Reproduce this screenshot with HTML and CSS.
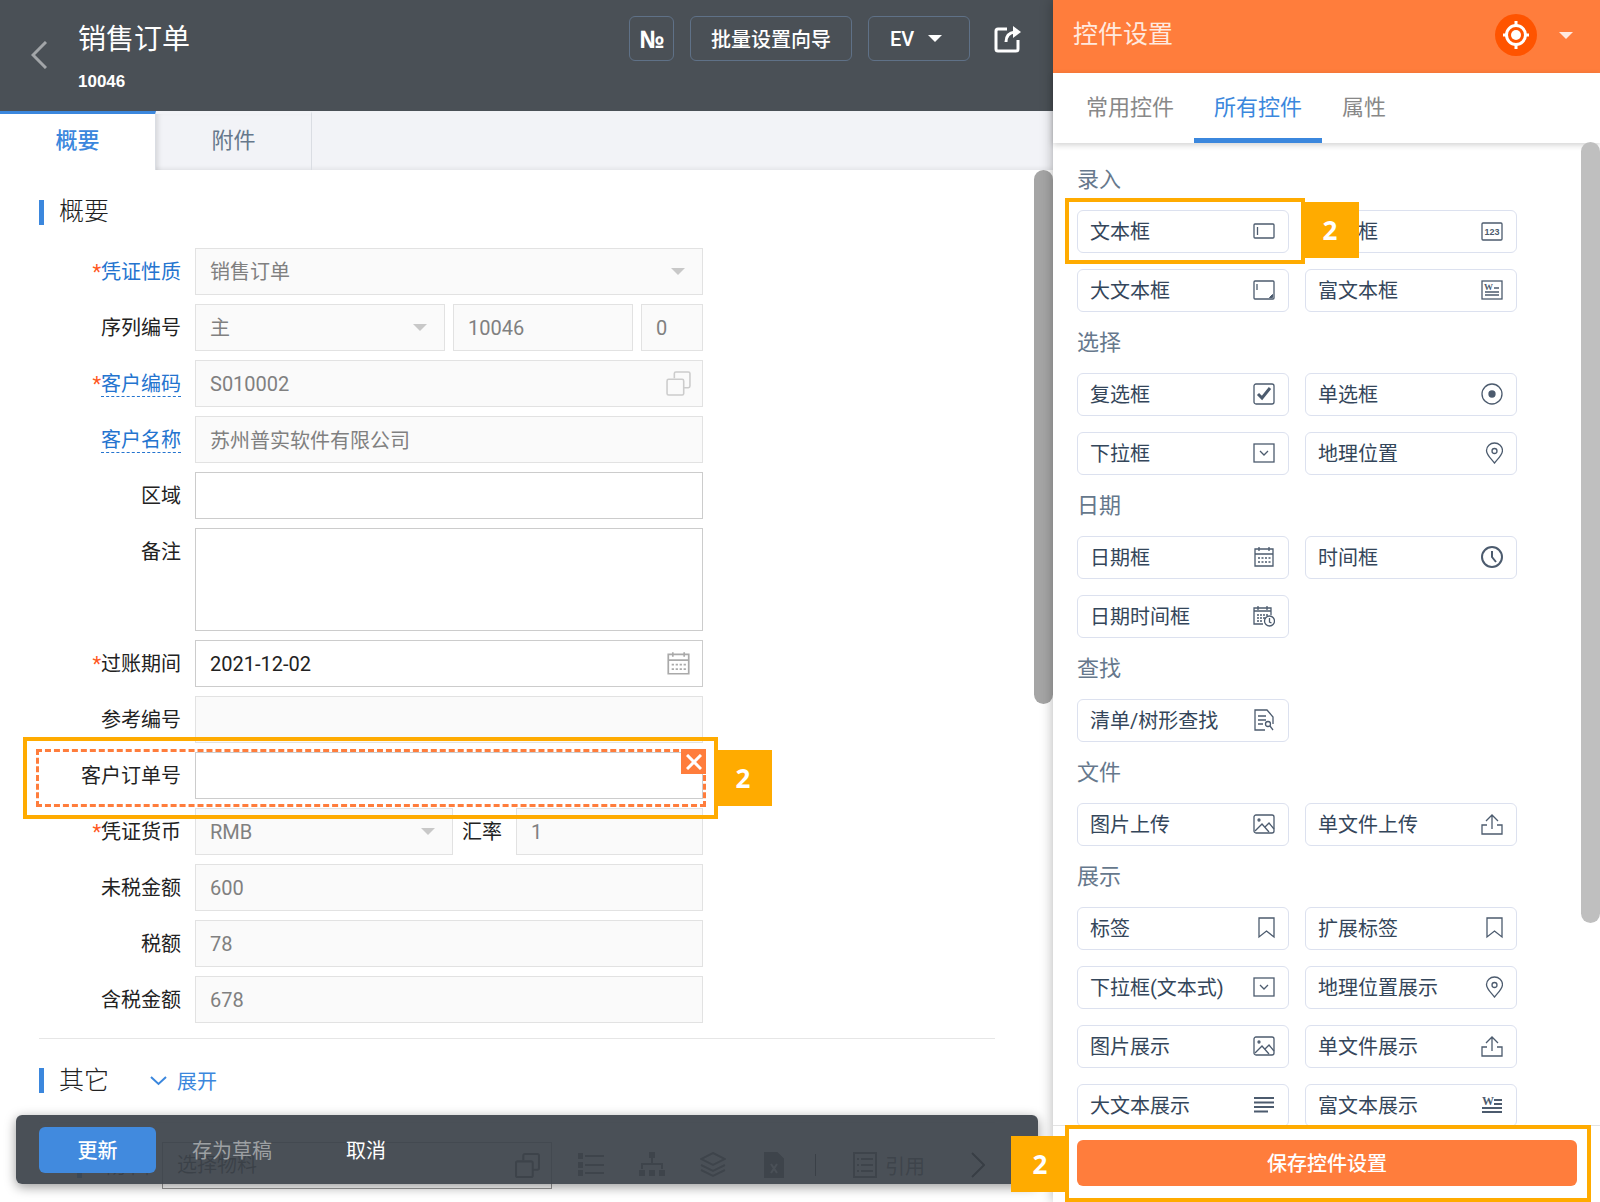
FILE: index.html
```html
<!DOCTYPE html>
<html lang="zh-CN">
<head>
    <meta charset="UTF-8">
    <meta name="viewport" content="width=device-width, initial-scale=1.0">
    <title>销售订单 - 控件设置</title>
    <link rel="stylesheet" href="styles.css">
</head>
<body>
    <!-- Shared icons -->
    <svg class="sprite" aria-hidden="true">
        <symbol id="i-copy" viewBox="0 0 24 24"><path d="M8 7V2.5A1.5 1.5 0 0 1 9.500 1H21.500A1.500 1.500 0 0 1 23 2.500V14.500A1.500 1.500 0 0 1 21.500 16H17"/><rect x="1" y="8" width="16" height="15" rx="1.500"/></symbol>
        <symbol id="i-text" viewBox="0 0 22 22"><rect x="1" y="4" width="20" height="14" rx="1"/><path d="M4.500 7v8"/></symbol>
        <symbol id="i-number" viewBox="0 0 22 22"><rect x="1" y="3" width="20" height="17" rx="1"/><text x="11" y="15" text-anchor="middle" class="icon-text">123</text></symbol>
        <symbol id="i-area" viewBox="0 0 22 22"><rect x="1" y="2" width="20" height="18" rx="1"/><path d="M4 5v6"/><path d="M19.500 15.500v3h-3z" fill="currentColor" stroke-width="1"/></symbol>
        <symbol id="i-rich" viewBox="0 0 22 22"><rect x="1" y="2" width="20" height="18"/><text x="3" y="11" class="icon-serif-small">W</text><path d="M13 9h5M4 13h14M4 16h14"/></symbol>
        <symbol id="i-check" viewBox="0 0 22 22"><rect x="1" y="1" width="20" height="20" rx="2"/><path d="M5 11l4 4 8-10" stroke-width="3"/></symbol>
        <symbol id="i-radio" viewBox="0 0 22 22"><circle cx="11" cy="11" r="10"/><circle cx="11" cy="11" r="3" fill="currentColor"/></symbol>
        <symbol id="i-select" viewBox="0 0 22 22"><rect x="1" y="2" width="20" height="18"/><path d="M7 9l4 4 4-4"/></symbol>
        <symbol id="i-pin" viewBox="0 0 22 22"><path d="M13.500 21C10 16.500 5.500 13 5.500 8.500a8 7.500 0 0 1 16 0C21.500 13 17 16.500 13.500 21z"/><circle cx="13.500" cy="9" r="2.500"/></symbol>
        <symbol id="i-date" viewBox="0 0 22 22"><path d="M2 3h18v17H2zM2 8h18M6 1v4M16 1v4"/><path d="M5 12h13M5 16h13" stroke-dasharray="2 1.500"/></symbol>
        <symbol id="i-clock" viewBox="0 0 22 22"><circle cx="11" cy="11" r="10" stroke-width="2"/><path d="M11 5v6l4 5" stroke-width="2"/></symbol>
        <symbol id="i-datetime" viewBox="0 0 22 22"><path d="M10 19H1V3h17v7M1 6h17M5 1v4M14 1v4"/><path d="M4 10h11M4 13h8M4 16h6" stroke-dasharray="2 1"/><circle cx="16.500" cy="16" r="5"/><path d="M16.500 13v4l2 1"/></symbol>
        <symbol id="i-find" viewBox="0 0 22 22"><path d="M12 21H2V1h12l6 7v7M5 7h8M5 11h8M5 15h5"/><circle cx="15" cy="15" r="2.500"/><path d="M17 17l3 4"/></symbol>
        <symbol id="i-image" viewBox="0 0 22 22"><rect x="1" y="2" width="20" height="18" rx="2"/><circle cx="6" cy="7" r="1"/><path d="M2 18l7-7 7 8M12 14l4-4 5 6"/></symbol>
        <symbol id="i-upload" viewBox="0 0 22 22"><path d="M11 16V3M5 8l6-6 6 6M6 12H1v9h20v-9h-5"/></symbol>
        <symbol id="i-mark" viewBox="0 0 22 22"><path d="M6 1h15v19l-7.500-6L6 20z"/></symbol>
        <symbol id="i-lines" viewBox="0 0 22 22"><path d="M1 4h20M1 8.500h20M1 13h20M1 17.500h14" stroke-width="2"/></symbol>
        <symbol id="i-richview" viewBox="0 0 22 22"><text x="1" y="11" class="icon-serif">W</text><path d="M13 6h8M13 10h8M1 14h20M1 18h20" stroke-width="2"/></symbol>
    </svg>

    <main class="order">
        <header class="order-header">
            <button class="back" aria-label="返回"><svg width="16" height="28" viewBox="0 0 16 28"><path d="M15 1L2 14l13 13"/></svg></button>
            <div class="order-title">
                <h1>销售订单</h1>
                <p>10046</p>
            </div>
            <div class="order-actions">
                <button class="head-btn head-btn-no">№</button>
                <button class="head-btn head-btn-wide">批量设置向导</button>
                <button class="head-btn head-btn-menu">EV <span class="caret"></span></button>
                <button class="share" aria-label="分享"><svg width="28" height="28" viewBox="0 0 28 28"><path d="M13 4H4Q2 4 2 6v18q0 2 2 2h18q2 0 2-2v-9M12 17Q12 8 21 7"/><path d="M19 1l8 6-8 6z" fill="currentColor" stroke="none"/></svg></button>
            </div>
        </header>

        <nav class="order-tabs">
            <a href="#summary" class="active">概要</a>
            <a href="#attachment">附件</a>
        </nav>

        <div class="order-body">
            <section id="summary">
                <h2 class="section-title">概要</h2>
                <form class="fields">
                    <div class="field">
                        <label class="blue" for="nature"><i>*</i>凭证性质</label>
                        <div class="control select"><select id="nature" disabled><option>销售订单</option></select></div>
                    </div>
                    <div class="field">
                        <label for="series">序列编号</label>
                        <div class="series">
                            <div class="control select"><select id="series" disabled><option>主</option></select></div>
                            <input aria-label="编号" value="10046" disabled>
                            <input aria-label="版本" value="0" disabled>
                        </div>
                    </div>
                    <div class="field">
                        <label class="blue" for="custCode"><i>*</i><u>客户编码</u></label>
                        <div class="control"><input id="custCode" value="S010002" disabled><svg class="field-icon light"><use href="#i-copy"/></svg></div>
                    </div>
                    <div class="field">
                        <label class="blue" for="custName"><u>客户名称</u></label>
                        <input id="custName" value="苏州普实软件有限公司" disabled>
                    </div>
                    <div class="field">
                        <label for="area">区域</label>
                        <input id="area">
                    </div>
                    <div class="field">
                        <label for="remark">备注</label>
                        <textarea id="remark"></textarea>
                    </div>
                    <div class="field">
                        <label for="postDate"><i>*</i>过账期间</label>
                        <div class="control"><input id="postDate" value="2021-12-02"><svg class="field-icon"><use href="#i-date"/></svg></div>
                    </div>
                    <div class="field">
                        <label for="refNo">参考编号</label>
                        <input id="refNo" disabled>
                    </div>
                    <div class="field selected">
                        <label for="custOrder">客户订单号</label>
                        <input id="custOrder">
                        <button type="button" class="remove" aria-label="删除"><svg width="16" height="16" viewBox="0 0 16 16"><path d="M1 1l14 14M15 1L1 15"/></svg></button>
                        <div class="callout callout-field"><span>2</span></div>
                    </div>
                    <div class="field">
                        <label for="currency"><i>*</i>凭证货币</label>
                        <div class="currency">
                            <div class="control select"><select id="currency" disabled><option>RMB</option></select></div>
                            <label for="rate">汇率</label>
                            <input id="rate" value="1" disabled>
                        </div>
                    </div>
                    <div class="field">
                        <label for="net">未税金额</label>
                        <input id="net" value="600" disabled>
                    </div>
                    <div class="field">
                        <label for="tax">税额</label>
                        <input id="tax" value="78" disabled>
                    </div>
                    <div class="field">
                        <label for="gross">含税金额</label>
                        <input id="gross" value="678" disabled>
                    </div>
                </form>
            </section>

            <section class="other">
                <h2 class="section-title">其它</h2>
                <a href="#other" class="expand"><svg width="17" height="10" viewBox="0 0 17 10"><path d="M1 1l7.500 7L16 1"/></svg>展开</a>
            </section>

            <section class="items">
                <svg class="items-back" viewBox="0 0 10 18"><path d="M9 1L1 9l8 8"/></svg>
                <h2 class="section-title">物料</h2>
                <div class="control items-search"><input aria-label="选择物料" placeholder="选择物料"><svg class="field-icon"><use href="#i-copy"/></svg></div>
                <div class="items-tools">
                    <svg viewBox="0 0 26 26"><path d="M7 4h19M7 13h19M7 21h19" /><path d="M0 2h4v4H0zM0 11h4v4H0zM0 19h4v4H0z" fill="currentColor"/></svg>
                    <svg viewBox="0 0 26 26"><path d="M13 6v6M3 17v-5h20v5"/><path d="M11 1h4v4h-4zM1 19h4v4H1zM11 19h4v4h-4zM21 19h4v4h-4z" fill="currentColor"/></svg>
                    <svg viewBox="0 0 26 26"><path d="M13 1l12 6-12 6L1 7zM1 13l12 6 12-6M1 18l12 6 12-6"/></svg>
                    <svg viewBox="0 0 26 26"><path d="M4 1h12l6 6v18H4z" fill="currentColor"/><path d="M10 12l6 9M16 12l-6 9" class="cut"/></svg>
                </div>
                <div class="items-quote">
                    <svg viewBox="0 0 26 26"><path d="M2 1h22v24H2zM5 7h2M5 13h2M5 19h2M9 7h12M9 13h12M9 19h12"/></svg>
                    <span>引用</span>
                </div>
                <svg class="items-next" viewBox="0 0 14 26"><path d="M1 1l12 12L1 25"/></svg>
            </section>
        </div>

        <div class="scrollbar order-scroll"></div>

        <footer class="action-bar">
            <button class="primary">更新</button>
            <button class="muted">存为草稿</button>
            <button>取消</button>
        </footer>
    </main>

    <aside class="panel">
        <header class="panel-header">
            <h2>控件设置</h2>
            <button class="locate" aria-label="定位"><svg width="28" height="28" viewBox="0 0 28 28"><circle cx="14" cy="14" r="9.500"/><circle cx="14" cy="14" r="5" fill="currentColor" stroke="none"/><path d="M14 0v5M14 23v5M1 14h4M23 14h4"/></svg></button>
            <span class="caret"></span>
        </header>
        <nav class="panel-tabs">
            <a href="#common">常用控件</a>
            <a href="#all" class="active">所有控件</a>
            <a href="#props">属性</a>
        </nav>

        <div class="panel-body">
            <h3>录入</h3>
            <div class="widgets">
                <div class="marked">
                    <button class="widget">文本框<svg><use href="#i-text"/></svg></button>
                    <div class="callout callout-widget"><span>2</span></div>
                </div>
                <button class="widget">数字框<svg><use href="#i-number"/></svg></button>
                <button class="widget">大文本框<svg><use href="#i-area"/></svg></button>
                <button class="widget">富文本框<svg><use href="#i-rich"/></svg></button>
            </div>
            <h3>选择</h3>
            <div class="widgets">
                <button class="widget">复选框<svg><use href="#i-check"/></svg></button>
                <button class="widget">单选框<svg><use href="#i-radio"/></svg></button>
                <button class="widget">下拉框<svg><use href="#i-select"/></svg></button>
                <button class="widget">地理位置<svg><use href="#i-pin"/></svg></button>
            </div>
            <h3>日期</h3>
            <div class="widgets">
                <button class="widget">日期框<svg><use href="#i-date"/></svg></button>
                <button class="widget">时间框<svg><use href="#i-clock"/></svg></button>
                <button class="widget">日期时间框<svg><use href="#i-datetime"/></svg></button>
            </div>
            <h3>查找</h3>
            <div class="widgets">
                <button class="widget">清单/树形查找<svg><use href="#i-find"/></svg></button>
            </div>
            <h3>文件</h3>
            <div class="widgets">
                <button class="widget">图片上传<svg><use href="#i-image"/></svg></button>
                <button class="widget">单文件上传<svg><use href="#i-upload"/></svg></button>
            </div>
            <h3>展示</h3>
            <div class="widgets">
                <button class="widget">标签<svg><use href="#i-mark"/></svg></button>
                <button class="widget">扩展标签<svg><use href="#i-mark"/></svg></button>
                <button class="widget">下拉框(文本式)<svg><use href="#i-select"/></svg></button>
                <button class="widget">地理位置展示<svg><use href="#i-pin"/></svg></button>
                <button class="widget">图片展示<svg><use href="#i-image"/></svg></button>
                <button class="widget">单文件展示<svg><use href="#i-upload"/></svg></button>
                <button class="widget">大文本展示<svg><use href="#i-lines"/></svg></button>
                <button class="widget">富文本展示<svg><use href="#i-richview"/></svg></button>
            </div>
        </div>

        <div class="scrollbar panel-scroll"></div>

        <footer class="panel-footer">
            <button class="save">保存控件设置</button>
            <div class="callout callout-save"><span>2</span></div>
        </footer>
    </aside>
</body>
</html>
```

FILE: styles.css
```css
:root {
    --dark: #4a5056;
    --blue: #3b87dd;
    --orange: #ff7d3c;
    --mark: #ffab00;
    --slate: #66788c;
    --ink: #34465a;
}

* {
    box-sizing: border-box;
}

body {
    display: flex;
    height: 100vh;
    margin: 0;
    overflow: hidden;
    background: #fff;
    font-family: Roboto, 'Noto Sans CJK SC', sans-serif;
    font-size: 20px;
    color: #222;
}

h1, h2, h3, p {
    margin: 0;
    font-weight: 400;
}

a {
    text-decoration: none;
}

button {
    padding: 0;
    border: none;
    background: none;
    color: inherit;
    font: inherit;
    cursor: pointer;
}

svg {
    fill: none;
    stroke: currentColor;
    stroke-width: 1.5;
}

.sprite {
    position: absolute;
    width: 0;
    height: 0;
}

.icon-text,
.icon-serif,
.icon-serif-small {
    fill: currentColor;
    stroke: none;
    font-family: 'Liberation Sans', sans-serif;
    font-size: 9px;
    font-weight: 700;
}

.icon-serif {
    font-family: 'Liberation Serif', serif;
    font-size: 12px;
}

.icon-serif-small {
    font-family: 'Liberation Serif', serif;
}

.caret {
    border: 7px solid transparent;
    border-top-color: currentColor;
    border-bottom: none;
}

/* Order page */
.order {
    position: relative;
    display: flex;
    flex: 1;
    flex-direction: column;
    min-width: 0;
}

.order-header {
    display: flex;
    height: 111px;
    padding: 16px 31px 0 31px;
    background: var(--dark);
    color: #fff;
}

.back {
    align-self: flex-start;
    width: 16px;
    height: 28px;
    margin: 25px 31px 0 0;
    color: #a2a5a8;
}

.back svg {
    display: block;
    stroke-width: 3;
}

.order-title h1 {
    font-size: 28px;
    line-height: 48px;
}

.order-title p {
    font-family: 'Liberation Sans', sans-serif;
    font-size: 17px;
    font-weight: 700;
    line-height: 36px;
}

.order-actions {
    display: flex;
    gap: 16px;
    margin-left: auto;
}

.head-btn {
    display: flex;
    align-items: center;
    justify-content: center;
    height: 45px;
    border: 1px solid #5f7187;
    border-radius: 6px;
    font-weight: 500;
}

.head-btn-no {
    width: 45px;
    font-family: 'Open Sans', sans-serif;
    font-size: 24px;
    font-weight: 700;
}

.head-btn-wide {
    width: 162px;
}

.head-btn-menu {
    gap: 14px;
    width: 102px;
    padding-right: 6px;
}

.share {
    width: 28px;
    height: 45px;
    margin-left: 8px;
}

.share svg {
    display: block;
    stroke-width: 3;
}

.order-tabs {
    display: flex;
    height: 59px;
    background: #f2f3f7;
    box-shadow: inset 0 -2px 4px rgba(0, 0, 0, 0.06);
}

.order-tabs a {
    width: 156px;
    border-top: 3px solid transparent;
    border-right: 1px solid #dadde3;
    color: var(--slate);
    font-size: 22px;
    line-height: 54px;
    text-align: center;
}

.order-tabs .active {
    border-top-color: var(--blue);
    background: #fff;
    color: var(--blue);
    font-weight: 500;
}

.order-tabs .active + a {
    box-shadow: inset 5px 0 5px -3px rgba(0, 0, 0, 0.12);
}

.order-body {
    flex: 1;
    min-height: 0;
    overflow: hidden;
    padding: 24px 58px 0 39px;
}

.section-title {
    display: flex;
    align-items: center;
    gap: 15px;
    height: 36px;
    font-size: 25px;
    font-weight: 300;
    line-height: 34px;
    color: #222;
}

.section-title::before {
    content: "";
    width: 5px;
    height: 25px;
    background: var(--blue);
}

.fields {
    display: flex;
    flex-direction: column;
    gap: 9px;
    max-width: 664px;
    padding: 18px 0 15px;
}

.field {
    position: relative;
    display: grid;
    grid-template-columns: 142px 1fr;
    column-gap: 14px;
}

label {
    height: 47px;
    line-height: 49px;
    text-align: right;
    white-space: nowrap;
}

label i {
    color: #ff5722;
    font-style: normal;
}

label.blue {
    color: #2474cf;
}

label u {
    border-bottom: 1px dashed #2474cf;
    text-decoration: none;
}

input, select, textarea {
    display: block;
    width: 100%;
    min-width: 0;
    height: 47px;
    margin: 0;
    padding: 0 14px;
    border: 1px solid #ccc;
    border-radius: 0;
    outline: none;
    background: #fff;
    color: #222;
    font: inherit;
    appearance: none;
    resize: none;
}

input:disabled, select:disabled {
    border-color: #e2e2e2;
    background: #fafafa;
    color: #808080;
    opacity: 1;
}

textarea {
    height: 103px;
}

.control {
    position: relative;
}

.select::after {
    content: "";
    position: absolute;
    top: 20px;
    right: 18px;
    border: 7px solid transparent;
    border-top-color: #c8c8c8;
    border-bottom: none;
}

.field-icon {
    position: absolute;
    top: 11px;
    right: 12px;
    width: 25px;
    height: 25px;
    color: #aaa;
}

.field-icon.light {
    color: #ccc;
}

.series {
    display: grid;
    grid-template-columns: 250px 1fr 62px;
    gap: 8px;
}

.currency {
    display: grid;
    grid-template-columns: 258px 41px 1fr;
    gap: 0 8px;
}

.currency input {
    width: auto;
    margin-left: 6px;
}

.selected {
    z-index: 1;
}

.selected::after {
    content: "";
    position: absolute;
    inset: -3px -3px -8px -3px;
    border: 3px dashed var(--orange);
    pointer-events: none;
}

.remove {
    position: absolute;
    z-index: 1;
    top: -3px;
    right: -3px;
    display: grid;
    place-items: center;
    width: 25px;
    height: 25px;
    background: var(--orange);
    color: #fff;
}

.remove svg {
    stroke-width: 3;
}

.other {
    display: flex;
    align-items: center;
    gap: 41px;
    height: 85px;
    border-top: 1px solid #e6e6e6;
    border-bottom: 1px solid #e6e6e6;
}

.expand {
    display: flex;
    align-items: center;
    gap: 10px;
    color: var(--blue);
}

.expand svg {
    stroke-width: 2;
}

/* Item toolbar, seen through the action bar */
.items {
    display: flex;
    align-items: center;
    height: 84px;
    padding-left: 20px;
    color: #555;
}

.items .section-title {
    gap: 20px;
    padding-left: 9px;
}

.items-back {
    width: 9px;
    height: 18px;
    color: #999;
}

.items-search {
    width: 390px;
    margin-left: 10px;
}

.items-search input {
    border-color: #999;
}

.items-search input::placeholder {
    color: #333;
    opacity: 1;
}

.items-search .field-icon {
    color: #444;
    stroke-width: 2;
}

.items-tools {
    display: flex;
    align-items: center;
    gap: 35px;
    height: 22px;
    margin-left: 26px;
    padding-right: 28px;
    border-right: 1px solid #222;
}

.items-tools svg,
.items-quote svg {
    width: 26px;
    height: 26px;
    stroke-width: 2;
}

.items-quote {
    display: flex;
    align-items: center;
    gap: 7px;
    margin-left: 36px;
}

.items-tools .cut {
    stroke: #fff;
}

.items-next {
    width: 14px;
    height: 26px;
    margin: 0 10px 0 auto;
    color: #000;
    stroke-width: 2;
}

.scrollbar {
    position: absolute;
    right: 0;
    width: 19px;
    border-radius: 10px;
}

.order-scroll {
    top: 170px;
    height: 534px;
    background: #a5a5a5;
}

.action-bar {
    position: absolute;
    right: 15px;
    bottom: 18px;
    left: 16px;
    display: flex;
    align-items: center;
    gap: 36px;
    height: 69px;
    padding-left: 23px;
    border-radius: 6px;
    background: rgba(60, 67, 74, 0.93);
    box-shadow: 0 3px 12px rgba(0, 0, 0, 0.4);
    color: #fff;
}

.action-bar .primary {
    width: 117px;
    height: 46px;
    border-radius: 6px;
    background: #418ade;
    font-weight: 500;
}

.action-bar .muted {
    margin-right: 38px;
    color: #9da0a3;
}

/* Widget panel */
.panel {
    position: relative;
    z-index: 2;
    display: flex;
    flex-direction: column;
    width: 547px;
    background: #fff;
    box-shadow: 0 0 12px rgba(0, 0, 0, 0.3);
}

.panel-header {
    display: flex;
    flex: none;
    align-items: center;
    height: 73px;
    padding: 0 27px 3px 20px;
    background: var(--orange);
    color: #ffe9df;
}

.panel-header h2 {
    font-size: 25px;
    line-height: 36px;
}

.locate {
    display: grid;
    place-items: center;
    width: 42px;
    height: 42px;
    margin: 0 22px 0 auto;
    border-radius: 50%;
    background: #ff5400;
    color: #fff;
}

.locate svg {
    stroke-width: 3;
}

.panel-tabs {
    position: relative;
    display: flex;
    flex: none;
    height: 70px;
    padding-left: 13px;
    box-shadow: 0 2px 6px rgba(0, 0, 0, 0.18);
    font-size: 22px;
    line-height: 70px;
}

.panel-tabs a {
    padding: 0 20px;
    color: #888;
}

.panel-tabs .active {
    border-bottom: 5px solid var(--blue);
    color: var(--blue);
}

.panel-body {
    flex: 1;
    min-height: 0;
    overflow: hidden;
    padding: 6px 83px 0 24px;
}

.panel-body h3 {
    height: 61px;
    color: var(--slate);
    font-size: 22px;
    line-height: 61px;
}

.widgets {
    display: grid;
    grid-template-columns: 1fr 1fr;
    gap: 16px;
}

.widget {
    display: flex;
    align-items: center;
    justify-content: space-between;
    width: 100%;
    height: 43px;
    padding: 0 13px 2px 12px;
    border: 1px solid #dce1ef;
    border-radius: 6px;
    background: #fff;
    color: var(--ink);
    white-space: nowrap;
}

.widget svg {
    flex: none;
    width: 22px;
    height: 22px;
    color: #4c5b6e;
    stroke-width: 1.3;
}

.marked {
    position: relative;
}

.panel-scroll {
    top: 142px;
    height: 781px;
    background: #bfbfbf;
}

.panel-footer {
    position: relative;
    flex: none;
    height: 77px;
    padding: 14px 23px 0 24px;
    border-top: 1px solid #e3e3e3;
}

.save {
    width: 100%;
    height: 46px;
    padding-bottom: 2px;
    border-radius: 6px;
    background: var(--orange);
    color: #fff;
    font-weight: 500;
}

/* Numbered callouts */
.callout {
    position: absolute;
    z-index: 2;
    border: 4px solid var(--mark);
    pointer-events: none;
}

.callout span {
    position: absolute;
    top: 9px;
    left: 100%;
    width: 58px;
    background: var(--mark);
    color: #fff;
    font-family: 'Open Sans', sans-serif;
    font-size: 26px;
    font-weight: 700;
    line-height: 56px;
    text-align: center;
}

.callout-field {
    inset: -15px -15px -20px -16px;
}

.callout-widget {
    inset: -12px -16px -11px -12px;
}

.callout-widget span {
    top: 0;
}

.callout-save {
    inset: -1px 9px 0 12px;
}

.callout-save span {
    top: 7px;
    right: 100%;
    left: auto;
}
```
